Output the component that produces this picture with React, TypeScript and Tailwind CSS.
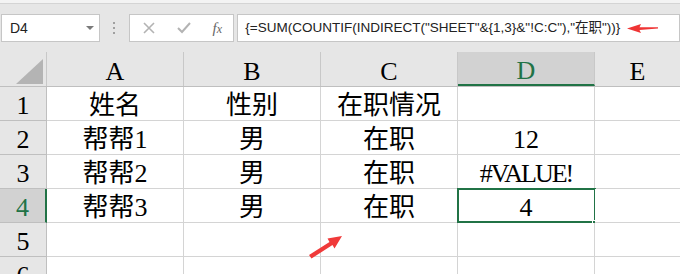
import React from 'react';

const cols = ['A', 'B', 'C', 'D', 'E'];
const rows = [
  ['姓名', '性别', '在职情况', '', ''],
  ['帮帮1', '男', '在职', '12', ''],
  ['帮帮2', '男', '在职', '#VALUE!', ''],
  ['帮帮3', '男', '在职', '4', ''],
  ['', '', '', '', ''],
  ['', '', '', '', ''],
];

const cellFont = { fontFamily: '"Liberation Serif", "Noto Sans CJK SC", serif' };

const App = () => {
  return (
    <div className="relative w-[680px] h-[274px] overflow-hidden bg-[#e6e6e6]">
      <div className="h-[3px] bg-[#f3f3f3]" />
      <div className="h-px bg-[#d4d4d4]" />

      {/* toolbar */}
      <div
        className="h-[48px] flex items-start pt-[10px] text-[14px] text-[#222]"
        style={{ fontFamily: '"Liberation Sans", "Noto Sans CJK SC", sans-serif' }}
      >
        <div className="ml-px w-[102px] h-[28px] bg-white border border-[#c6c6c6] flex items-center justify-between pl-[8px] pr-[5px]">
          <span>D4</span>
          <span className="w-0 h-0 border-l-[4px] border-r-[4px] border-t-[4px] border-l-transparent border-r-transparent border-t-[#7a7a7a]" />
        </div>
        <div className="w-[30px] h-[28px] flex flex-col items-center justify-center gap-[3px]">
          <span className="w-[2px] h-[2px] bg-[#a0a0a0]" />
          <span className="w-[2px] h-[2px] bg-[#a0a0a0]" />
          <span className="w-[2px] h-[2px] bg-[#a0a0a0]" />
        </div>
        <div className="w-[110px] h-[28px] bg-white border border-[#c6c6c6] flex items-center">
          <svg width="12" height="12" viewBox="0 0 12 12" className="ml-[13px]">
            <path d="M1 1 L11 11 M11 1 L1 11" stroke="#b3b3b3" strokeWidth="1.6" />
          </svg>
          <svg width="14" height="12" viewBox="0 0 14 12" className="ml-[22px]">
            <path d="M1 6 L5 10 L13 1" stroke="#b3b3b3" strokeWidth="2" fill="none" />
          </svg>
          <span
            className="ml-[22px] italic text-[15px] text-[#666]"
            style={{ fontFamily: '"Liberation Serif", serif' }}
          >
            f<span className="text-[12px]">x</span>
          </span>
        </div>
        <div className="ml-[3px] w-[460px] h-[28px] bg-white border border-[#c6c6c6] flex items-center pl-[7px] whitespace-nowrap text-[13.5px]">
          {'{=SUM(COUNTIF(INDIRECT("SHEET"&{1,3}&"!C:C"),"在职"))}'}
        </div>
      </div>

      {/* column headers */}
      <div className="flex h-[35px] border-b border-[#bfbfbf]" style={cellFont}>
        <div className="w-[47px] shrink-0 border-r border-[#c8c8c8] flex items-end justify-end pr-[3px] pb-[2px]">
          <svg width="27" height="25">
            <polygon points="27,0 27,25 0,25" fill="#b4b4b4" />
          </svg>
        </div>
        {cols.map((c) => (
          <div
            key={c}
            className={
              c === 'D'
                ? 'w-[137px] shrink-0 border-r border-[#c8c8c8] bg-[#d2d2d2] border-b-2 border-b-[#217346] text-[#217346] flex items-center justify-center text-[26px] pt-[4px]'
                : c === 'E'
                ? 'flex-1 flex items-center justify-center text-[26px] text-black pt-[4px]'
                : 'w-[137px] shrink-0 border-r border-[#c8c8c8] flex items-center justify-center text-[26px] text-black pt-[4px]'
            }
          >
            {c}
          </div>
        ))}
      </div>

      {/* rows */}
      {rows.map((r, i) => (
        <div key={i} className="flex h-[34px]" style={cellFont}>
          <div
            className={
              i === 3
                ? 'w-[47px] shrink-0 bg-[#d2d2d2] border-r-2 border-r-[#217346] border-b border-b-[#bfbfbf] text-[#217346] flex items-center justify-center text-[26px] pt-[3px]'
                : 'w-[47px] shrink-0 border-r border-[#bfbfbf] border-b border-b-[#bfbfbf] flex items-center justify-center text-[26px] text-black pt-[3px]'
            }
          >
            {i + 1}
          </div>
          {r.map((v, j) => (
            <div
              key={j}
              className={
                j === 4
                  ? 'relative flex-1 bg-white border-b border-[#d4d4d4] flex items-center justify-center text-[26px] text-black pt-[3px]'
                  : 'relative w-[137px] shrink-0 bg-white border-r border-b border-[#d4d4d4] flex items-center justify-center text-[26px] text-black pt-[3px]'
              }
            >
              <span className={v === '#VALUE!' ? 'tracking-[-2px]' : ''}>{v}</span>
              {i === 3 && j === 3 && (
                <>
                  <div className="absolute -left-px -top-px w-[139px] h-[35px] border-2 border-[#217346]" />
                  <div className="absolute -right-[3px] -bottom-[3px] w-[5px] h-[5px] bg-[#217346] border border-white" />
                </>
              )}
            </div>
          ))}
        </div>
      ))}

      {/* red arrows */}
      <svg className="absolute left-0 top-0 pointer-events-none" width="680" height="274">
        <polygon points="627,28.5 641,24 639.5,27.2 658,27.3 658,28.4 639.5,30 641,33" fill="#ef3434" />
        <polygon
          points="342,236 334.5,248.5 332.5,245 311.5,258.5 309,255 329.5,242 327.5,238.5"
          fill="#f03a3a"
        />
      </svg>
    </div>
  );
};

export default App;
